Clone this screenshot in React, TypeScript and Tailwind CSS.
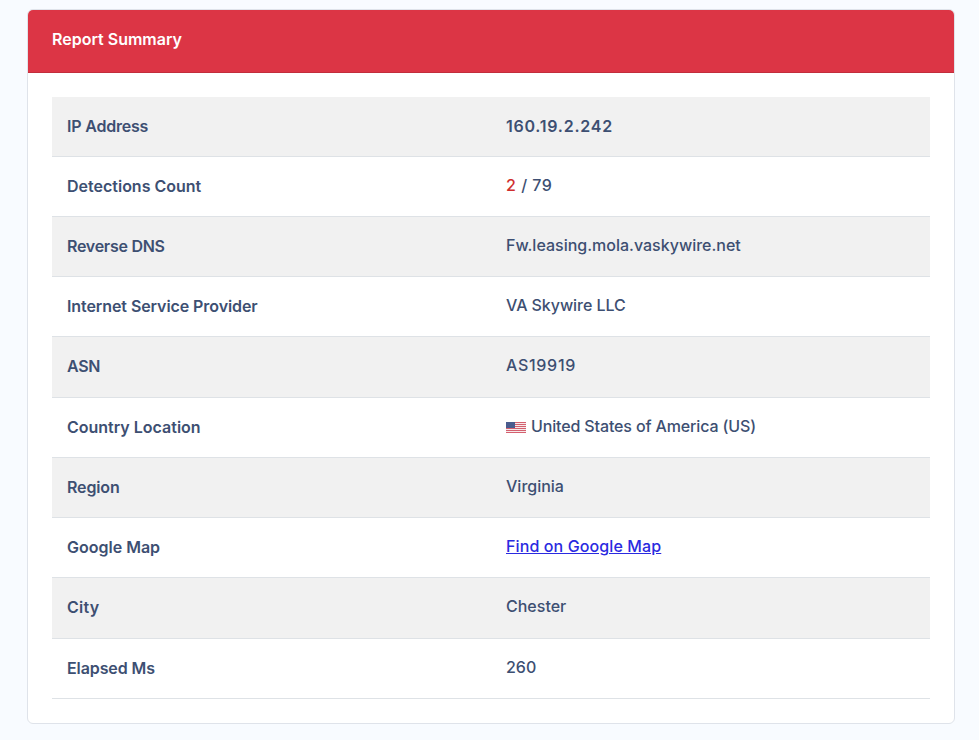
function Flag() {
  const stripes = [0, 2, 4, 6, 8, 10];
  return (
    <svg width="20" height="11" viewBox="0 0 20 11" className="mr-[5px] shrink-0 mt-[3px]">
      <rect width="20" height="11" fill="#f6e9ea" />
      {stripes.map((y) => (
        <rect key={y} y={y} width="20" height="1" fill="#d4606f" />
      ))}
      <rect width="9" height="6" fill="#4a5c8e" />
    </svg>
  );
}

const data: { label: string; labelClass?: string; value: React.ReactNode; valueClass?: string }[] = [
  { label: "IP Address", labelClass: "tracking-[-0.2px]", value: "160.19.2.242", valueClass: "font-semibold tracking-[0.75px] pb-[1.3px]" },
  { label: "Detections Count", value: <><span className="text-[#cf2e2e]">2</span> / 79</>, valueClass: "tracking-[0.5px]" },
  { label: "Reverse DNS", labelClass: "tracking-[-0.27px]", value: "Fw.leasing.mola.vaskywire.net" },
  { label: "Internet Service Provider", labelClass: "tracking-[-0.08px]", value: "VA Skywire LLC", valueClass: "tracking-[-0.07px]" },
  { label: "ASN", labelClass: "tracking-[-0.3px]", value: "AS19919", valueClass: "tracking-[0.7px]" },
  { label: "Country Location", value: <span className="flex items-center tracking-[-0.14px]"><Flag />United States of America (US)</span> },
  { label: "Region", labelClass: "tracking-[-0.15px]", value: "Virginia" },
  { label: "Google Map", value: <a href="#" className="text-[#2a2ae0] underline tracking-[0.11px]">Find on Google Map</a> },
  { label: "City", labelClass: "tracking-[0.25px]", value: "Chester" },
  { label: "Elapsed Ms", labelClass: "tracking-[-0.1px]", value: "260" },
];

export default function App() {
  return (
    <div className="min-h-[740px] bg-[#f8fbff] px-[27px] pt-[9px] font-['Inter',sans-serif] text-[16px] text-[#3d4f72]">
      <div className="h-[715px] w-[928px] overflow-hidden rounded-[6px] border border-[#dfe3ea] bg-white">
        <div className="flex h-[63px] items-center border-b border-[#c22e3c] bg-[#dc3545] px-6 pb-[4px] text-[16px] font-semibold text-white">
          Report Summary
        </div>
        <div className="px-6 pt-[23.6px]">
          {data.map((r, i) => (
            <div
              key={r.label}
              className={`grid h-[60.22px] grid-cols-2 items-center border-b border-[#dee2e6] ${i % 2 === 0 ? "bg-[#f1f1f1]" : "bg-white"}`}
            >
              <div className={`px-[15px] pb-[1.3px] font-semibold ${r.labelClass ?? ""}`}>{r.label}</div>
              <div className={`px-[15px] font-medium ${r.valueClass?.includes("pb-") ? "" : "pb-[3.3px]"} ${r.valueClass ?? ""}`}>{r.value}</div>
            </div>
          ))}
        </div>
      </div>
    </div>
  );
}
